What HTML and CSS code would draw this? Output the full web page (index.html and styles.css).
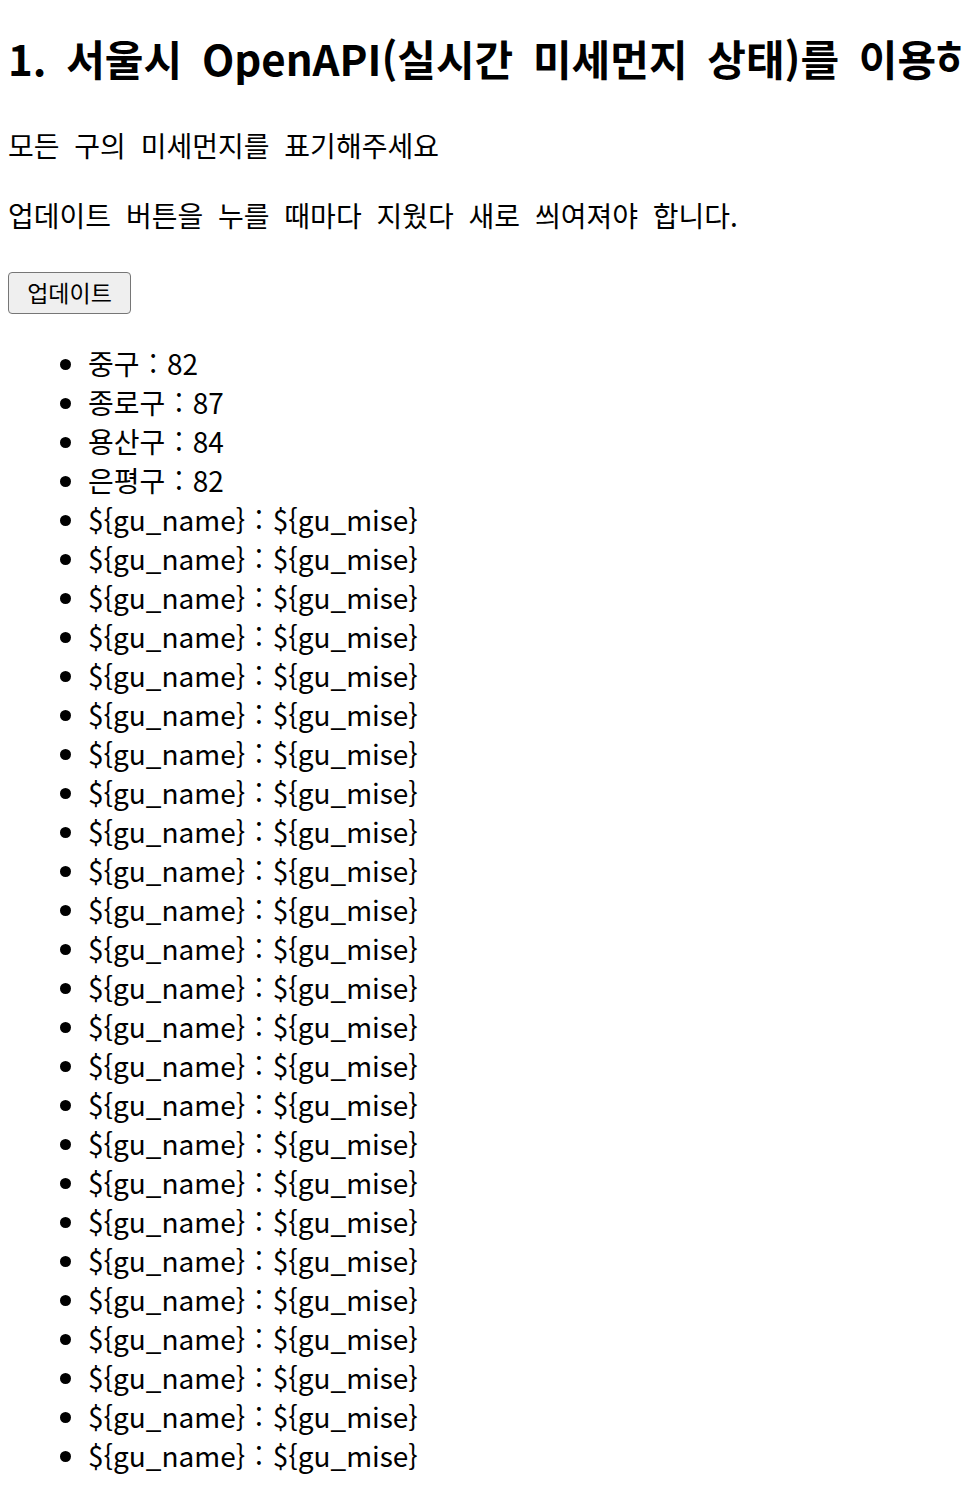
FILE: index.html
```html
<!DOCTYPE html>
<html lang="ko">
<head>
<meta charset="utf-8">
<title>서울시 미세먼지</title>
<link rel="stylesheet" href="styles.css">
</head>
<body>
<h1 class="title">1. 서울시 OpenAPI(실시간 미세먼지 상태)를 이용하여 구별 미세먼지를 표기하기</h1>
<p class="desc">모든 구의 미세먼지를 표기해주세요</p>
<p class="desc">업데이트 버튼을 누를 때마다 지웠다 새로 씌여져야 합니다.</p>
<div class="actions"><button class="update-btn" type="button">업데이트</button></div>
<ul class="gu-list">
<li>중구 : 82</li>
<li>종로구 : 87</li>
<li>용산구 : 84</li>
<li>은평구 : 82</li>
<li>${gu_name} : ${gu_mise}</li>
<li>${gu_name} : ${gu_mise}</li>
<li>${gu_name} : ${gu_mise}</li>
<li>${gu_name} : ${gu_mise}</li>
<li>${gu_name} : ${gu_mise}</li>
<li>${gu_name} : ${gu_mise}</li>
<li>${gu_name} : ${gu_mise}</li>
<li>${gu_name} : ${gu_mise}</li>
<li>${gu_name} : ${gu_mise}</li>
<li>${gu_name} : ${gu_mise}</li>
<li>${gu_name} : ${gu_mise}</li>
<li>${gu_name} : ${gu_mise}</li>
<li>${gu_name} : ${gu_mise}</li>
<li>${gu_name} : ${gu_mise}</li>
<li>${gu_name} : ${gu_mise}</li>
<li>${gu_name} : ${gu_mise}</li>
<li>${gu_name} : ${gu_mise}</li>
<li>${gu_name} : ${gu_mise}</li>
<li>${gu_name} : ${gu_mise}</li>
<li>${gu_name} : ${gu_mise}</li>
<li>${gu_name} : ${gu_mise}</li>
<li>${gu_name} : ${gu_mise}</li>
<li>${gu_name} : ${gu_mise}</li>
<li>${gu_name} : ${gu_mise}</li>
<li>${gu_name} : ${gu_mise}</li>
</ul>
</body>
</html>
```
FILE: styles.css
```css
html {
  overflow-x: hidden;
  background: #ffffff;
}

body {
  margin: 0;
  padding: 0 8px;
  color: #000000;
  font-family: "Noto Sans CJK KR", "Noto Sans", sans-serif;
  font-size: 28px;
  line-height: 39px;
}

.title {
  margin: 32px 0 42px;
  font-size: 42px;
  line-height: 52px;
  font-weight: 700;
  white-space: nowrap;
  word-spacing: 8px;
}

.desc {
  margin: 31px 0;
  word-spacing: 7px;
}

.actions {
  display: flex;
  margin-top: 37px;
}

.update-btn {
  font-family: "Noto Sans CJK KR", "Noto Sans", sans-serif;
  font-size: 23px;
  line-height: 30px;
  color: #000000;
  background: #efefef;
  border: 1px solid #767676;
  border-radius: 4px;
  padding: 4px 14px 6px;
  height: 42px;
  width: 123px;
}

.gu-list {
  margin: 30px 0 0;
  padding-left: 80px;
  word-spacing: 2px;
}
```
